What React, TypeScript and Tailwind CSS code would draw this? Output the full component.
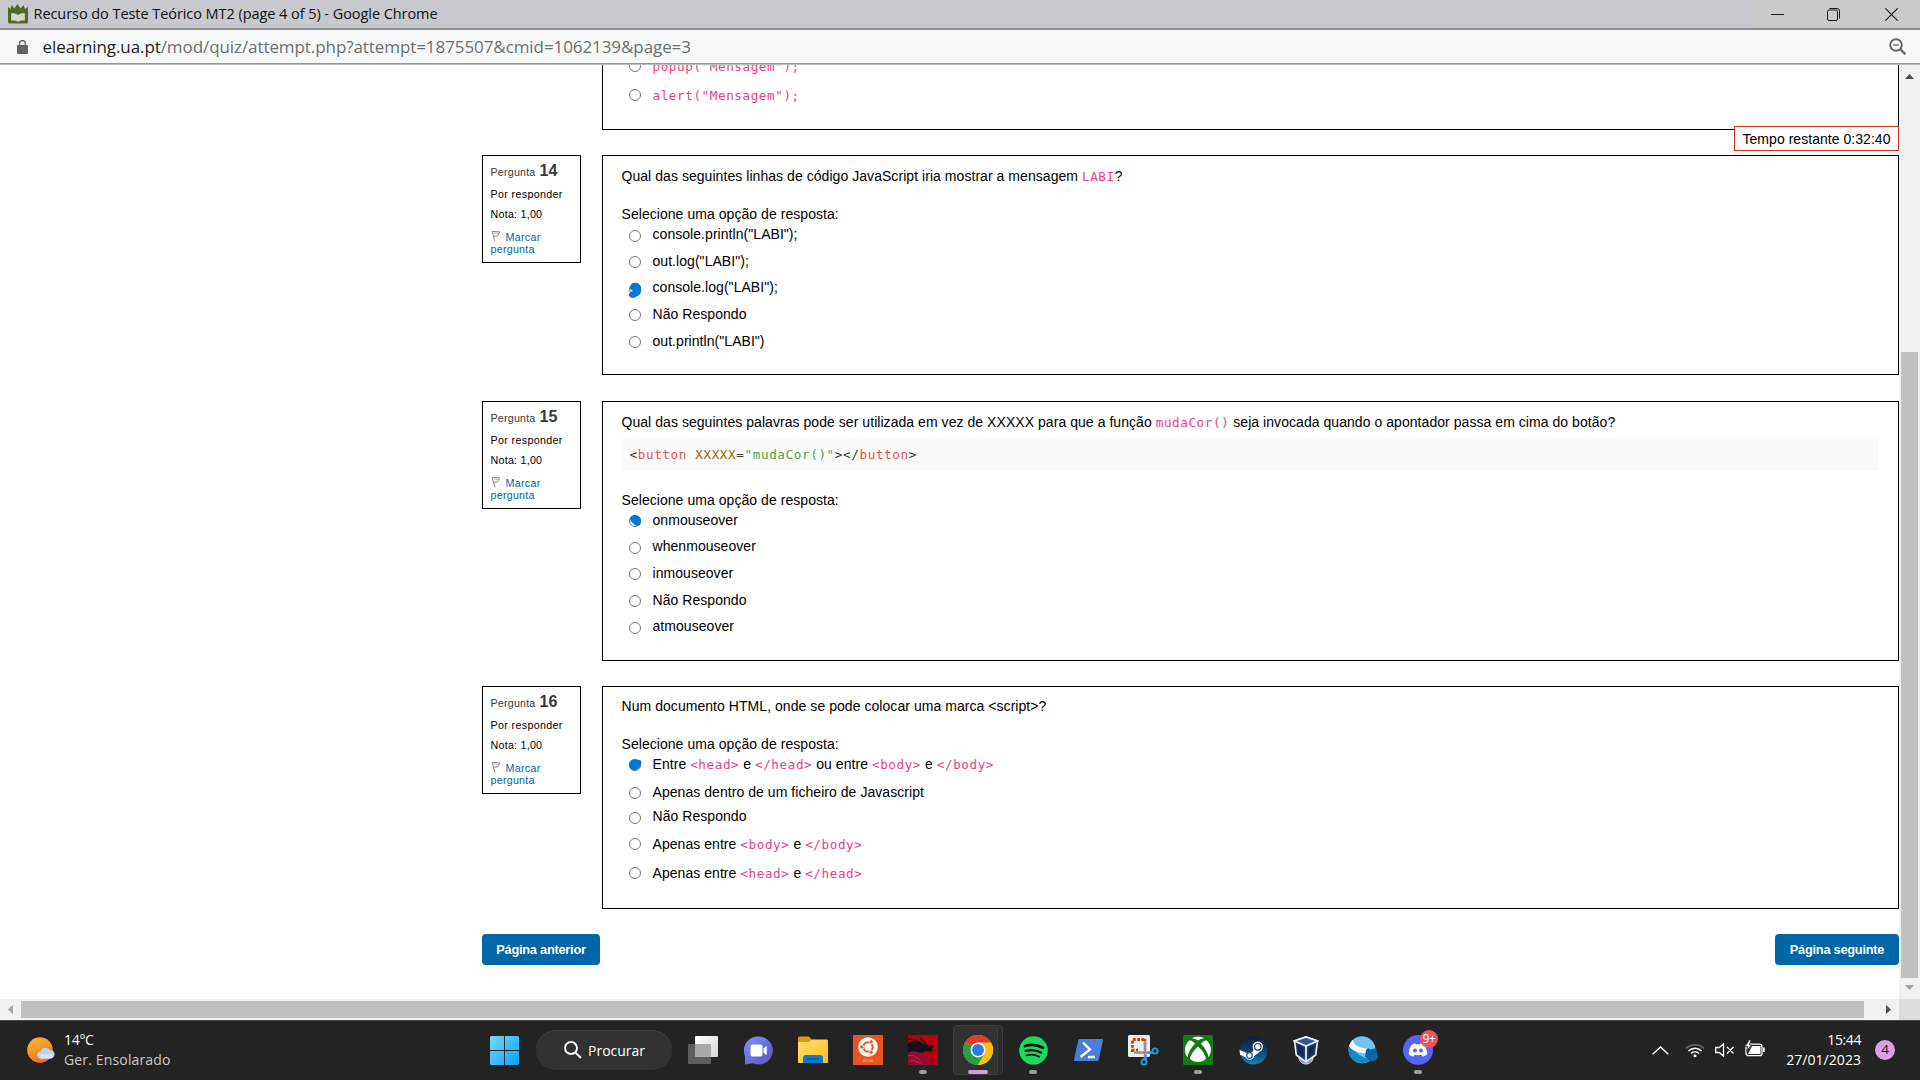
import React from "react";

const Code = ({ children }: { children: React.ReactNode }) => (
  <span className="font-['DejaVu_Sans_Mono',monospace] text-[12.6px] leading-none tracking-[0.6px] text-[#e83e8c]">{children}</span>
);

type Mark = "none" | "double" | "upper" | "full";

const Radio = ({ mark = "none" }: { mark?: Mark }) => (
  <svg width="16" height="20" viewBox="0 0 16 20" className="shrink-0 overflow-visible">
    <circle cx="8" cy="10" r="5.5" fill="#fff" stroke="#767676" strokeWidth="1" />
    {mark === "double" && (
      <path d="M5 4.500C7 3.600 10 3.500 12 5c2 1.700 2.700 5 1.900 8-.5 2.500-2.400 3.700-4.400 4.300-1.500 1.800-4.500 2.200-6.200 1C1.400 16.900 1.500 14.500 3.200 13.200c1-.9 2-.9 3-.8C5.800 11.200 4.500 10.800 3.200 10.200 2.800 8 3.500 5.500 5 4.500Z" fill="#0078d7" />
    )}
    {mark === "upper" && (
      <path d="M3.500 6C5.500 3.500 10.500 3.600 12.700 6.200c2 2.300 1.600 6-.2 8-1.500 1-3.500.5-5-.8C5.500 12 2 9.500 3.500 6Z" fill="#0078d7" />
    )}
    {mark === "full" && (
      <path d="M3 6.500C5 4 8 4.500 10 5c2-.6 4.300 0 4.300 2 .2 3-1 5.500-3.300 6.800-2.500 2-6 2-7.700-.3C1.700 11.500 1.800 8.500 3 6.500Z" fill="#0078d7" />
    )}
  </svg>
);

const Option = ({ children, size, mark, nudge = "mt-0" }: { children: React.ReactNode; size: string; mark?: Mark; nudge?: string }) => (
  <div className={"flex items-start pl-[5px] " + size}>
    <div className={nudge}>
      <Radio mark={mark} />
    </div>
    <div className="ml-[10px] h-[20px] leading-[20px] whitespace-nowrap">{children}</div>
  </div>
);

const Info = ({ n }: { n: number }) => (
  <div className="h-[108px] w-[99px] shrink-0 border border-black pl-[7.500px] text-[10.700px] leading-[13px] text-black">
    <div className="mt-[5px] h-[20px] leading-[20px] text-[#373a3c]">
      <span className="mr-[4px] tracking-[0.2px]">Pergunta</span>
      <span className="text-[16px] font-bold">{n}</span>
    </div>
    <div className="mt-[7px] tracking-[0.35px]">Por responder</div>
    <div className="mt-[7px] tracking-[0.25px]">Nota: 1,00</div>
    <div className="mt-[10px] leading-[12px] text-[#0066a1]">
      <div className="flex items-center">
        <svg width="10" height="12" viewBox="0 0 10 12" className="mr-[5px] -mt-[3px]" fill="none" stroke="#8a8a8a">
          <path d="M1 1l3 10.500M1.200 1.500l7.500.3-2 4-4 .4" />
          <path d="M3 3l4 .5" stroke="#bbb" />
        </svg>
        <span className="tracking-[0.3px]">Marcar</span>
      </div>
      <div className="tracking-[0.25px]">pergunta</div>
    </div>
  </div>
);

const Box = ({ children, size }: { children: React.ReactNode; size: string }) => (
  <div className={"flex-1 border border-black pl-[18.500px] pr-[19px] text-[14px] tracking-[0.052px] text-black " + size}>{children}</div>
);

const Slot = ({ children, running }: { children: React.ReactNode; running?: boolean }) => (
  <div className="relative flex h-[60px] w-[55px] shrink-0 items-center justify-center">
    {children}
    {running && <div className="absolute bottom-[6px] left-[23.500px] h-[4px] w-[8px] rounded-full bg-[#9b9b9b]" />}
  </div>
);

const Start = () => (
  <svg width="29" height="29" viewBox="0 0 29 29">
    <defs>
      <linearGradient id="win" x1="0" y1="0" x2="1" y2="1" gradientUnits="objectBoundingBox">
        <stop offset="0" stopColor="#6fdcfb" />
        <stop offset="1" stopColor="#0f9df8" />
      </linearGradient>
    </defs>
    <path d="M1 0h13v14H0V1zM15 0h13l1 1v13H15zM0 15h14v14H1l-1-1zM15 15h14v13l-1 1H15z" fill="url(#win)" />
  </svg>
);

const TaskView = () => (
  <svg width="30" height="28" viewBox="0 0 30 28">
    <defs>
      <linearGradient id="tv" x1="0" y1="0" x2="1" y2="1"><stop stopColor="#fff" /><stop offset="1" stopColor="#d6d6d6" /></linearGradient>
    </defs>
    <rect x="0" y="8" width="23" height="20" rx="1" fill="#5d5d5d" />
    <rect x="7" y="0" width="23" height="21" rx="1" fill="url(#tv)" />
    <path d="M7 8h16v13H7z" fill="#a9a9a9" />
  </svg>
);

const Teams = () => (
  <svg width="29" height="29" viewBox="0 0 29 29">
    <defs>
      <linearGradient id="tm" x1="0" y1="0" x2="1" y2="1"><stop stopColor="#8a8df0" /><stop offset=".4" stopColor="#6f7be0" /><stop offset="1" stopColor="#5a4fbd" /></linearGradient>
    </defs>
    <path d="M15 .5A14 14 0 1 1 9 27.200L1 28.500V20A14 14 0 0 1 15 .5Z" fill="url(#tm)" />
    <rect x="6.500" y="8.500" width="12" height="12" rx="2" fill="#fff" />
    <path d="M19.500 12.500l3.200-2.700v9.400l-3.200-2.700z" fill="#fff" />
  </svg>
);

const Folder = () => (
  <svg width="30" height="28" viewBox="0 0 30 28">
    <defs>
      <linearGradient id="fo" x1="0" y1="0" x2="1" y2="1"><stop stopColor="#ffe07a" /><stop offset="1" stopColor="#fdbd17" /></linearGradient>
    </defs>
    <path d="M0 2a1.500 1.500 0 0 1 1.500-1.500H11L14 4h15v6H0z" fill="#dc9a0a" />
    <path d="M0 6h11l3-2.500h15l1 1V27H0z" fill="url(#fo)" />
    <path d="M5 27v-5a3 3 0 0 1 3-3h14a3 3 0 0 1 3 3v5z" fill="#0f7ad0" />
    <path d="M9 23h12" stroke="#0a4f94" strokeWidth="1.200" />
  </svg>
);

const Ubuntu = () => (
  <div className="flex h-[30px] w-[30px] flex-col items-center bg-[#e95420] pt-[2px]">
    <svg width="20" height="20" viewBox="0 0 20 20">
      <circle cx="10" cy="10" r="9.800" fill="#fff" />
      <circle cx="10" cy="10" r="4.700" fill="none" stroke="#e95420" strokeWidth="2" />
      <g fill="#e95420" stroke="#fff" strokeWidth=".8">
        <circle cx="3.800" cy="10" r="2" /><circle cx="13.200" cy="4.700" r="2" /><circle cx="13.200" cy="15.300" r="2" />
      </g>
    </svg>
    <div className="mt-[1px] font-['Liberation_Sans',sans-serif] text-[4px] leading-[5px] text-[#ffd0bd]">20.04</div>
  </div>
);

const Dragon = () => (
  <svg width="30" height="30" viewBox="0 0 30 30">
    <rect width="30" height="30" fill="#b80012" />
    <path d="M0 15c6-3 14 3 18 6s8 5 12 9H0z" fill="#8f0d2e" />
    <path d="M0 8c4-2 8-3 12 0l3 1 9 1 2 2-2 2 1 2-3 1c-2-1-5-1-6 0-2 2-5 0-7 0-3-1-6-1-9 1z" fill="#15101c" />
    <path d="M0 4c4 0 9 1 14 5M12 3c2 2 4 4 6 6" stroke="#15101c" strokeWidth="1.500" fill="none" />
    <path d="M0 21c5-2 8 1 12 4M2 26c4-1 8 1 11 3" stroke="#d42a4c" strokeWidth=".8" fill="none" />
  </svg>
);

const Chrome = () => (
  <svg width="30" height="30" viewBox="0 0 48 48">
    <circle cx="24" cy="24" r="24" fill="#fbc116" />
    <path d="M24 24 3.200 12A24 24 0 0 1 44.800 12Z" fill="#e33b2e" />
    <path d="M3.200 12A24 24 0 0 0 24 48L34.400 30 24 24Z" fill="#2a9b47" />
    <path d="M24 12h20.800A24 24 0 0 1 24 48l10.400-18Z" fill="#fbc116" />
    <circle cx="24" cy="24" r="12" fill="#fff" />
    <circle cx="24" cy="24" r="9.500" fill="#2a7de9" />
  </svg>
);

const Spotify = () => (
  <svg width="29" height="29" viewBox="0 0 29 29" fill="none" stroke="#111" strokeLinecap="round">
    <circle cx="14.500" cy="14.500" r="14.300" fill="#1ed760" stroke="none" />
    <path d="M6 10c6-1.800 12.500-1.200 18 1.800" strokeWidth="2.800" />
    <path d="M6.800 14.900c5.500-1.500 10.500-.9 15.200 1.700" strokeWidth="2.300" />
    <path d="M7.500 19.300c4.600-1.200 8.800-.7 12.700 1.500" strokeWidth="1.800" />
  </svg>
);

const PowerShell = () => (
  <svg width="29" height="22" viewBox="0 0 29 22">
    <path d="M5.500 0H28a1 1 0 0 1 1 1.200l-4.300 19.600a1.500 1.500 0 0 1-1.400 1.200H1a1 1 0 0 1-1-1.200L4.200 1.200A1.500 1.500 0 0 1 5.500 0Z" fill="#4a7fd6" />
    <path d="M9 3.500l7 7L6.500 18M14 18h7" fill="none" stroke="#fff" strokeWidth="2.400" />
  </svg>
);

const Snip = () => (
  <svg width="31" height="31" viewBox="0 0 31 31">
    <rect x="0" y="0" width="22" height="22" rx="1.500" fill="#eceef0" />
    <path d="M4.500 17V4.500H17" fill="none" stroke="#d83b01" strokeWidth="2.800" strokeDasharray="2.800 1.500" />
    <path d="M17 4v6M4 15h6" stroke="#d83b01" strokeWidth="2.500" strokeDasharray="2.500 1.500" />
    <path d="M17 7v18M6 17.500h18" stroke="#8e9299" strokeWidth="2.600" />
    <circle cx="27" cy="16" r="2.600" fill="none" stroke="#1a9fe8" strokeWidth="1.800" />
    <circle cx="16" cy="27" r="2.600" fill="none" stroke="#1a9fe8" strokeWidth="1.800" />
    <path d="M20 18l5-1M17.500 20v5" stroke="#1a9fe8" strokeWidth="2.200" />
  </svg>
);

const Xbox = () => (
  <svg width="30" height="30" viewBox="0 0 30 30">
    <rect width="30" height="30" rx="1.500" fill="#107c10" />
    <path d="M15 5.600c-2-1.500-4-2.300-6-2.200C11 2 13 1.800 15 1.800s4 .3 6 1.600c-2-.1-4 .7-6 2.200Z" fill="#fff" />
    <path d="M6.800 5.300c2 .4 4 2 5.200 3.400-4 4.300-7 9.300-7.600 13.600C.5 16.500 1.600 9 6.800 5.300ZM23.200 5.300c-2 .4-4 2-5.200 3.400 4 4.300 7 9.300 7.600 13.600 3.900-5.800 2.800-13.300-2.400-17ZM15 11.500c4 3.500 7.500 8.500 8 12.200-4.500 4.300-11.500 4.300-16 0 .5-3.700 4-8.700 8-12.200Z" fill="#fff" />
  </svg>
);

const Steam = () => (
  <svg width="29" height="29" viewBox="0 0 29 29">
    <defs>
      <linearGradient id="st" x1="0" y1="0" x2="0" y2="1"><stop stopColor="#101a45" /><stop offset=".5" stopColor="#0f3d6c" /><stop offset="1" stopColor="#1387b8" /></linearGradient>
    </defs>
    <circle cx="14.500" cy="14.500" r="14" fill="url(#st)" />
    <path d="M.6 14l8 3.200 5-1.500 2-4 3 0 1 5-4.500 3.200a4.500 4.500 0 0 1-8.500 1.300L1 18.800Z" fill="#fff" />
    <circle cx="18.800" cy="10.800" r="5.200" fill="#fff" />
    <circle cx="18.800" cy="10.800" r="3.300" fill="#fff" stroke="#12355f" strokeWidth="1.200" />
    <circle cx="10.500" cy="19.500" r="2.800" fill="none" stroke="#12558a" strokeWidth="1.200" />
  </svg>
);

const VBox = () => (
  <svg width="26" height="29" viewBox="0 0 26 29" className="mr-[4px]">
    <path d="M6 22c1 8 13 8 14 0z" fill="#7c8fb8" stroke="#e7ecf5" />
    <path d="M13 1l11.500 4-1.800 14L13 26l-9.700-7L1.500 5Z" fill="#1f3c6b" stroke="#e7ecf5" strokeWidth="1.700" />
    <path d="M1.500 5L13 10l11.500-5L13 1Z" fill="#35568c" stroke="#e7ecf5" strokeWidth="1.700" />
    <path d="M13 10v16" stroke="#e7ecf5" strokeWidth="1.800" />
    <path d="M4.500 9l6 3v9l-5-4zM21.500 9l-6 3v9l5-4z" fill="#102a52" />
  </svg>
);

const Globe = () => (
  <svg width="30" height="28" viewBox="0 0 30 28">
    <circle cx="14" cy="13.800" r="13.500" fill="#74c4f0" />
    <path d="M2.500 7A13.500 13.500 0 0 0 8 25.900C14 28 20 27.500 24 23 14 23 6 16 2.500 7Z" fill="#1a86c0" />
    <path d="M4.500 3.800C6 9 11 13 22 12.500l-3 4.500C11 17.500 3 14.500 1 9.500Z" fill="#f3fafe" />
    <path d="M18 14l2-2 3 1.500 5-1.500 2 9-2 3.500-6 1-5-5z" fill="#0867a6" />
  </svg>
);

const Discord = () => (
  <div className="relative">
    <svg width="30" height="30" viewBox="0 0 30 30">
      <circle cx="15" cy="15" r="15" fill="#5865f2" />
      <path d="M10 9l2.200-.8.8 1.300a14 14 0 0 1 4 0l.8-1.300L20 9c2.200.8 4 5.500 4.300 10.300-1.300 1.200-3 1.900-4.700 2.400l-1.200-1.900c-2.200.6-4.600.6-6.800 0l-1.200 1.900c-1.700-.5-3.400-1.200-4.700-2.400C6 14.500 7.800 9.800 10 9Z" fill="#fff" />
      <circle cx="12" cy="15.500" r="1.900" fill="#5865f2" /><circle cx="18" cy="15.500" r="1.900" fill="#5865f2" />
    </svg>
    <div className="absolute -top-[5px] left-[17px] flex h-[18px] w-[18px] items-center justify-center rounded-full bg-[#f0525a] font-['Open_Sans',sans-serif] text-[12px] leading-none tracking-[-0.3px] text-white">9+</div>
  </div>
);

export default function App() {
  return (
    <div className="flex h-[1080px] w-[1920px] flex-col overflow-hidden bg-white font-['Liberation_Sans',Arial,sans-serif]">
      <header className="flex h-[30px] shrink-0 items-center border-b-2 border-[#8d8d93] bg-[#c8c9ce]">
        <svg width="20" height="20" viewBox="0 0 16 20" preserveAspectRatio="none" className="ml-[8px]">
          <path d="M0 3l2 2 1-4 2 3.500L7.500 0 10 4.500 12.500 1l1 4L16 3v15a1.500 1.500 0 0 1-1.500 1.500h-13A1.500 1.500 0 0 1 0 18Z" fill="#52692c" />
          <path d="M2.500 9.500c2-.5 4 0 5.500 1.500 1.500-1.500 3.500-2 5.500-1.500v7c-2-.3-4 0-5.500 1.300-1.500-1.300-3.500-1.600-5.500-1.300Z" fill="#d3d7c9" />
        </svg>
        <div className="ml-[5.500px] w-[1000px] whitespace-nowrap font-['Open_Sans',sans-serif] text-[14.500px] tracking-[-0.060px] text-[#111]">Recurso do Teste Teórico MT2 (page 4 of 5) - Google Chrome</div>
        <div className="ml-auto flex h-full items-center bg-[#cacaca] text-[#1c1c1c]">
          <div className="flex w-[57px] justify-center"><svg width="13" height="13" viewBox="0 0 13 13"><path d="M0 6.500h13" stroke="currentColor" /></svg></div>
          <div className="flex w-[57px] justify-center">
            <svg width="13" height="13" viewBox="0 0 13 13" fill="none" stroke="currentColor" className="mr-[2px]"><rect x=".5" y="2" width="10" height="10.500" rx="1.500" /><path d="M2.500.5H10A2.500 2.500 0 0 1 12.500 3v7.500" /></svg>
          </div>
          <div className="flex w-[57px] justify-center"><svg width="13" height="13" viewBox="0 0 13 13"><path d="M.3.3l12.400 12.400M12.700.3L.3 12.700" stroke="currentColor" strokeWidth="1.100" /></svg></div>
        </div>
      </header>

      <div className="flex h-[35px] shrink-0 items-center border-b border-[#b9bfbc] bg-[#f8faf9]">
        <div className="flex h-[33px] w-full items-center border-b border-[#939896]">
          <svg width="11" height="14" viewBox="0 0 11 14" className="ml-[17px]"><rect y="5" width="11" height="9" rx="1" fill="#5f6368" /><path d="M2.600 6V3.500a2.900 2.900 0 0 1 5.800 0V6" fill="none" stroke="#5f6368" strokeWidth="1.400" /></svg>
          <div className="ml-[14.500px] whitespace-nowrap font-['Open_Sans',sans-serif] text-[17px] tracking-[-0.08px] text-[#6b6e71]"><span className="text-[#1c1d1f]">elearning.ua.pt</span>/mod/quiz/attempt.php?attempt=1875507&amp;cmid=1062139&amp;page=3</div>
          <svg width="18" height="18" viewBox="0 0 18 18" className="ml-auto mr-[13.500px]" fill="none" stroke="#5f6368"><circle cx="7" cy="7" r="5.800" strokeWidth="1.900" /><path d="M4.300 7h5.400" strokeWidth="1.400" /><path d="M11.300 11.300l5 5" strokeWidth="2.300" /></svg>
        </div>
      </div>

      <div className="flex h-[934px] shrink-0">
        <main className="relative h-[934px] w-[1899px] overflow-hidden pl-[482px]">
          <div className="flex">
            <div className="w-[120px] shrink-0" />
            <div className="h-[65px] flex-1 border border-t-0 border-black pl-[18.500px] text-[14px]">
              <Option size="-mt-[9px] h-[29px]"><Code>popup("Mensagem");</Code></Option>
              <Option size="h-[29px]"><Code>alert("Mensagem");</Code></Option>
            </div>
          </div>

          <section className="mt-[25px] flex items-start gap-[21px]">
            <Info n={14} />
            <Box size="h-[220px]">
              <div className="mt-[10px] h-[20px] leading-[20px]">Qual das seguintes linhas de código JavaScript iria mostrar a mensagem <Code>LABI</Code>?</div>
              <div className="mt-[18px] h-[20px] leading-[20px]">Selecione uma opção de resposta:</div>
              <Option size="h-[27px]" nudge="mt-[2px]">console.println("LABI");</Option>
              <Option size="h-[26px]" nudge="mt-[1px]">out.log("LABI");</Option>
              <Option size="h-[27px]" nudge="mt-[2px]" mark="double">console.log("LABI");</Option>
              <Option size="h-[27px]" nudge="mt-[1px]">Não Respondo</Option>
              <Option size="h-[27px]" nudge="mt-[1px]">out.println("LABI")</Option>
            </Box>
          </section>

          <section className="mt-[26px] flex items-start gap-[21px]">
            <Info n={15} />
            <Box size="h-[260px]">
              <div className="mt-[10px] h-[20px] leading-[20px]">Qual das seguintes palavras pode ser utilizada em vez de XXXXX para que a função <Code>mudaCor()</Code> seja invocada quando o apontador passa em cima do botão?</div>
              <div className="mt-[6px] h-[33px] bg-[#fafafa] pl-[8px] font-['DejaVu_Sans_Mono',monospace] text-[12.6px] leading-[33px] tracking-[0.63px] text-[#383a42]">
                &lt;<span className="text-[#e45649]">button</span> <span className="text-[#986801]">XXXXX</span>=<span className="text-[#50a14f]">"mudaCor()"</span>&gt;&lt;/<span className="text-[#e45649]">button</span>&gt;
              </div>
              <div className="mt-[19px] h-[20px] leading-[20px]">Selecione uma opção de resposta:</div>
              <Option size="h-[26px]" nudge="mt-[1px]" mark="upper">onmouseover</Option>
              <Option size="h-[27px]" nudge="mt-[2px]">whenmouseover</Option>
              <Option size="h-[27px]" nudge="mt-[1px]">inmouseover</Option>
              <Option size="h-[26px]" nudge="mt-[1px]">Não Respondo</Option>
              <Option size="h-[27px]" nudge="mt-[2px]">atmouseover</Option>
            </Box>
          </section>

          <section className="mt-[25px] flex items-start gap-[21px]">
            <Info n={16} />
            <Box size="h-[223px]">
              <div className="mt-[9px] leading-[20px]">Num documento HTML, onde se pode colocar uma marca &lt;script&gt;?</div>
              <div className="mt-[18px] h-[20px] leading-[20px]">Selecione uma opção de resposta:</div>
              <Option size="h-[28px]" nudge="mt-[1px]" mark="full">Entre <Code>&lt;head&gt;</Code> e <Code>&lt;/head&gt;</Code> ou entre <Code>&lt;body&gt;</Code> e <Code>&lt;/body&gt;</Code></Option>
              <Option size="h-[24px]" nudge="mt-[1px]">Apenas dentro de um ficheiro de Javascript</Option>
              <Option size="h-[28px]" nudge="mt-[2px]">Não Respondo</Option>
              <Option size="h-[29px]">Apenas entre <Code>&lt;body&gt;</Code> e <Code>&lt;/body&gt;</Code></Option>
              <Option size="h-[27px]">Apenas entre <Code>&lt;head&gt;</Code> e <Code>&lt;/head&gt;</Code></Option>
            </Box>
          </section>

          <div className="mt-[25px] flex justify-between text-[12.800px] font-bold text-white">
            <button className="h-[31px] w-[118px] rounded-[4px] bg-[#0066a6] tracking-[-0.25px]">Página anterior</button>
            <button className="h-[31px] w-[124px] rounded-[4px] bg-[#0066a6] tracking-[-0.25px]">Página seguinte</button>
          </div>

          <div className="absolute right-0 top-[61px] flex h-[25px] w-[165px] items-center justify-center border border-[#ca3120] bg-white pt-[2px] text-[14px] tracking-[0.04px] text-black">Tempo restante 0:32:40</div>
        </main>
        <div className="flex h-[934px] w-[21px] flex-col items-center bg-[#f1f1f1]">
          <svg width="9" height="5" viewBox="0 0 9 5" className="mt-[9px]"><path d="M0 5l4.500-5L9 5z" fill="#505050" /></svg>
          <div className="mt-[273px] h-[626px] w-[17px] bg-[#c1c1c1]" />
          <svg width="9" height="5" viewBox="0 0 9 5" className="mt-[7px]"><path d="M0 0h9L4.500 5z" fill="#a3a3a3" /></svg>
        </div>
      </div>

      <div className="flex h-[21px] shrink-0 items-center bg-[#f1f1f1]">
        <svg width="5" height="9" viewBox="0 0 5 9" className="ml-[8px]"><path d="M5 0v9L0 4.500z" fill="#a3a3a3" /></svg>
        <div className="ml-[8px] h-[17px] w-[1843px] bg-[#c1c1c1]" />
        <svg width="5" height="9" viewBox="0 0 5 9" className="ml-[22px]"><path d="M0 0v9l5-4.500z" fill="#505050" /></svg>
        <div className="ml-auto h-[21px] w-[21px] bg-[#dcdcdc]" />
      </div>

      <footer className="relative flex h-[60px] shrink-0 items-center bg-[#232323] font-['Open_Sans',sans-serif] shadow-[inset_0_1px_0_#454545]">
        <svg width="28" height="27" viewBox="0 0 28 27" className="ml-[27px]">
          <defs><linearGradient id="sun" x1=".2" y1="0" x2=".7" y2="1"><stop stopColor="#f6b93b" /><stop offset="1" stopColor="#f26a10" /></linearGradient></defs>
          <circle cx="13" cy="13" r="12.800" fill="url(#sun)" />
          <path d="M14 21.500a3.500 3.500 0 0 1-.5-7 5 5 0 0 1 9-1.500 4 4 0 0 1 1.500 8.500z" fill="#b9d2f8" />
          <path d="M14 21.500a3 3 0 0 1 0-4.500h11a3.500 3.500 0 0 1-1 4.500z" fill="#d7e5fc" />
        </svg>
        <div className="ml-[9px] w-[426px] text-[14px] leading-[20px]">
          <div className="tracking-[-0.3px] text-white">14°C</div>
          <div className="tracking-[0.15px] text-[#c8c8c8]">Ger. Ensolarado</div>
        </div>
        <Start />
        <div className="ml-[17px] flex h-[40px] w-[136px] items-center rounded-full bg-[#323232] pl-[28px] shadow-[inset_0_1px_0_#3d3d3d]">
          <svg width="18" height="18" viewBox="0 0 18 18" fill="none" stroke="#fff" strokeWidth="1.900"><circle cx="7" cy="7" r="6" /><path d="M11.300 11.300l5.700 5.700" /></svg>
          <span className="ml-[6px] text-[14px] text-white">Procurar</span>
        </div>
        <div className="ml-[3.500px] flex items-center">
          <Slot><TaskView /></Slot>
          <Slot><Teams /></Slot>
          <Slot><Folder /></Slot>
          <Slot><Ubuntu /></Slot>
          <Slot running><Dragon /></Slot>
          <Slot>
            <div className="absolute left-[7px] top-[5px] h-[50px] w-[45px] rounded-[4px] border border-[#3c3c3c] bg-[#2a2a2a]" />
            <div className="absolute left-[2.500px] top-[5px] h-[50px] w-[45px] rounded-[4px] border border-[#3f3f3f] bg-[#313131]" />
            <div className="relative"><Chrome /></div>
            <div className="absolute bottom-[6px] left-[17.500px] h-[4px] w-[20px] rounded-full bg-[#d99be0]" />
          </Slot>
          <Slot running><Spotify /></Slot>
          <Slot><PowerShell /></Slot>
          <Slot><Snip /></Slot>
          <Slot running><Xbox /></Slot>
          <Slot><Steam /></Slot>
          <Slot><VBox /></Slot>
          <Slot><Globe /></Slot>
          <Slot running><Discord /></Slot>
        </div>
        <div className="ml-auto flex items-center text-white">
          <svg width="17" height="9" viewBox="0 0 17 9" fill="none" stroke="#fff" strokeWidth="1.400"><path d="M.7 8.300L8.500.9l7.800 7.400" /></svg>
          <svg width="20" height="15" viewBox="0 0 20 15" fill="none" stroke="#fff" strokeWidth="1.600" className="ml-[16px]">
            <path d="M.8 5.500a13 13 0 0 1 18.400 0" stroke="#6b6b6b" /><path d="M3.500 8a9 9 0 0 1 13 0" /><path d="M6 10.500a5.600 5.600 0 0 1 8 0" /><circle cx="10" cy="12.800" r="1.500" fill="#fff" stroke="none" />
          </svg>
          <svg width="20" height="14" viewBox="0 0 20 14" fill="none" stroke="#fff" strokeWidth="1.300" className="ml-[10px]"><path d="M.7 4.500h3.500L8.500.9v12.200L4.200 9.500H.7zM12 4l6.500 6.500M18.500 4L12 10.500" /></svg>
          <svg width="20" height="17" viewBox="0 0 20 17" className="ml-[10px] -mt-[3px]"><rect x="1" y="4.200" width="16" height="11.500" rx="2.500" fill="none" stroke="#fff" strokeWidth="1.300" /><path d="M7 6h8.500v8H3l1.500-3z" fill="#fff" /><path d="M18 7.500h1.800V12H18z" fill="#fff" /><path d="M4 0L.5 6.500h2.300L1.500 11l5-6H4.200L6 0z" fill="#fff" stroke="#232323" strokeWidth=".6" /></svg>
          <div className="ml-[10px] w-[86px] whitespace-nowrap text-right text-[14px] leading-[20px] tracking-[0.05px]">
            <div className="tracking-[-0.4px]">15:44</div>
            <div>27/01/2023</div>
          </div>
          <div className="ml-[14px] mr-[25px] flex h-[20px] w-[20px] items-center justify-center rounded-full bg-[#dd9fe6] text-[13.500px] leading-none text-[#1a1a1a]">4</div>
        </div>
      </footer>
    </div>
  );
}
